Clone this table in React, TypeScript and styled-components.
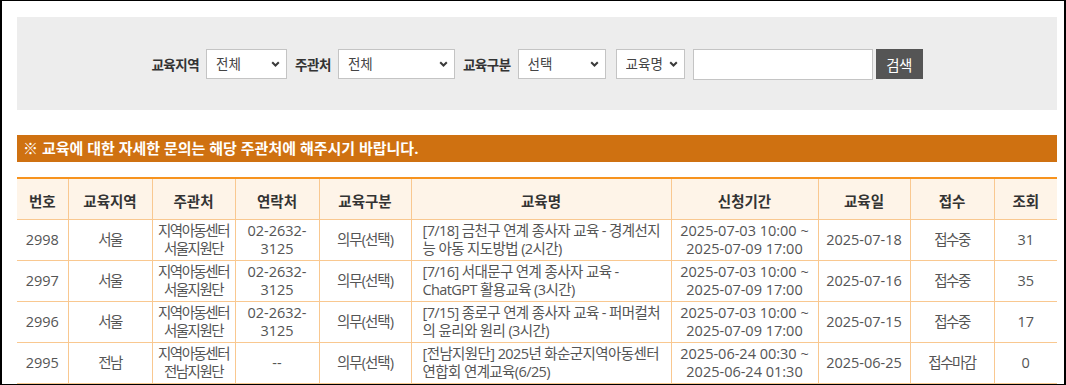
import React from 'react';
import styled, { createGlobalStyle } from 'styled-components';

interface Course {
    no: number;
    region: string;
    org: string[];
    phone: string[];
    kind: string;
    title: string[];
    period: string[];
    date: string;
    status: string;
    views: number;
}

const courses: Course[] = [
    {
        no: 2998,
        region: '서울',
        org: ['지역아동센터', '서울지원단'],
        phone: ['02-2632-', '3125'],
        kind: '의무(선택)',
        title: ['[7/18] 금천구 연계 종사자 교육 - 경계선지', '능 아동 지도방법 (2시간)'],
        period: ['2025-07-03 10:00 ~', '2025-07-09 17:00'],
        date: '2025-07-18',
        status: '접수중',
        views: 31,
    },
    {
        no: 2997,
        region: '서울',
        org: ['지역아동센터', '서울지원단'],
        phone: ['02-2632-', '3125'],
        kind: '의무(선택)',
        title: ['[7/16] 서대문구 연계 종사자 교육 -', 'ChatGPT 활용교육 (3시간)'],
        period: ['2025-07-03 10:00 ~', '2025-07-09 17:00'],
        date: '2025-07-16',
        status: '접수중',
        views: 35,
    },
    {
        no: 2996,
        region: '서울',
        org: ['지역아동센터', '서울지원단'],
        phone: ['02-2632-', '3125'],
        kind: '의무(선택)',
        title: ['[7/15] 종로구 연계 종사자 교육 - 퍼머컬처', '의 윤리와 원리 (3시간)'],
        period: ['2025-07-03 10:00 ~', '2025-07-09 17:00'],
        date: '2025-07-15',
        status: '접수중',
        views: 17,
    },
    {
        no: 2995,
        region: '전남',
        org: ['지역아동센터', '전남지원단'],
        phone: ['--'],
        kind: '의무(선택)',
        title: ['[전남지원단] 2025년 화순군지역아동센터', '연합회 연계교육(6/25)'],
        period: ['2025-06-24 00:30 ~', '2025-06-24 01:30'],
        date: '2025-06-25',
        status: '접수마감',
        views: 0,
    },
];

const columns = [
    { label: '번호', width: 51 },
    { label: '교육지역', width: 84 },
    { label: '주관처', width: 83 },
    { label: '연락처', width: 84 },
    { label: '교육구분', width: 92 },
    { label: '교육명', width: 260 },
    { label: '신청기간', width: 147 },
    { label: '교육일', width: 92 },
    { label: '접수', width: 84 },
    { label: '조회', width: 63 },
];

const Chevron = () => (
    <ChevronIcon viewBox="0 0 9 6" width="9" height="6">
        <path d="M1.2 1.2 L4.5 4.5 L7.8 1.2" fill="none" stroke="#3a3a3a" strokeWidth="2" />
    </ChevronIcon>
);

const SelectBox: React.FC<{ width: number; options: string[]; offset?: number }> = ({ width, options, offset }) => (
    <SelectWrap $width={width} $offset={offset ?? 0}>
        <Select defaultValue={options[0]}>
            {options.map(option => <option key={option}>{option}</option>)}
        </Select>
        <Chevron />
    </SelectWrap>
);

const Lines: React.FC<{ lines: string[] }> = ({ lines }) => (
    <>
        {lines.map((line, key) => <Line key={key}>{line}</Line>)}
    </>
);

const App: React.FC = () => (
    <>
        <GlobalStyle />
        <Frame>
            <SearchPanel onSubmit={e => e.preventDefault()}>
                <SearchRow>
                    <Field>
                        <Label>교육지역</Label>
                        <SelectBox width={81} options={['전체', '서울', '전남']} />
                    </Field>
                    <Field>
                        <Label>주관처</Label>
                        <SelectBox width={117} options={['전체']} />
                    </Field>
                    <Field>
                        <Label>교육구분</Label>
                        <SelectBox width={88} options={['선택', '의무', '의무(선택)']} />
                        <SelectBox width={69} offset={3} options={['교육명']} />
                    </Field>
                    <SearchBox>
                        <SearchInput type="text" />
                        <SearchButton type="submit">검색</SearchButton>
                    </SearchBox>
                </SearchRow>
            </SearchPanel>

            <Notice>※ 교육에 대한 자세한 문의는 해당 주관처에 해주시기 바랍니다.</Notice>

            <BoardTable>
                <colgroup>
                    {columns.map(col => <col key={col.label} style={{ width: col.width }} />)}
                </colgroup>
                <thead>
                    <tr>
                        {columns.map(col => <HeadCell key={col.label}>{col.label}</HeadCell>)}
                    </tr>
                </thead>
                <tbody>
                    {courses.map(course =>
                        <BodyRow key={course.no}>
                            <Cell>{course.no}</Cell>
                            <Cell $spacing={-1.5}>{course.region}</Cell>
                            <Cell $spacing={-1.5}><Lines lines={course.org} /></Cell>
                            <Cell><Lines lines={course.phone} /></Cell>
                            <Cell $spacing={-1}>{course.kind}</Cell>
                            <TitleCell><Lines lines={course.title} /></TitleCell>
                            <Cell><Lines lines={course.period} /></Cell>
                            <Cell>{course.date}</Cell>
                            <Cell $spacing={-1.5}>{course.status}</Cell>
                            <Cell>{course.views}</Cell>
                        </BodyRow>
                    )}
                </tbody>
            </BoardTable>
        </Frame>
    </>
);

const GlobalStyle = createGlobalStyle`
    html, body {
        margin: 0;
        padding: 0;
        background: #fff;
    }

    body {
        font-family: "Open Sans", "Noto Sans CJK KR", sans-serif;
    }
`;

const Frame = styled.div`
    box-sizing: border-box;
    width: 1066px;
    height: 385px;
    overflow: hidden;
    border: 2px solid #000;
    border-top-width: 1px;
    border-bottom-width: 1px;
    padding: 16px 7px 0 15px;
`;

const SearchPanel = styled.form`
    display: flex;
    align-items: center;
    justify-content: center;
    height: 93px;
    margin: 0;
    background: #ededed;
`;

const SearchRow = styled.div`
    display: flex;
    align-items: center;
    gap: 8px;
    margin-top: 1px;
`;

const Field = styled.div`
    display: flex;
    align-items: center;
    gap: 7px;
`;

const Label = styled.span`
    font-size: 13.5px;
    font-weight: 700;
    color: #333;
    letter-spacing: -0.5px;
`;

const SelectWrap = styled.div<{ $width: number; $offset: number }>`
    position: relative;
    width: ${p => p.$width}px;
    height: 30px;
    margin-left: ${p => p.$offset}px;
`;

const Select = styled.select`
    box-sizing: border-box;
    width: 100%;
    height: 100%;
    appearance: none;
    border: 1px solid #c4c4c4;
    border-radius: 0;
    background: #fff;
    padding: 0 20px 0 9px;
    font-family: "Open Sans", "Noto Sans CJK KR", sans-serif;
    font-size: 13.5px;
    color: #444;
    outline: none;
`;

const ChevronIcon = styled.svg`
    position: absolute;
    right: 7px;
    top: 12px;
    pointer-events: none;
`;

const SearchBox = styled.div`
    display: flex;
    align-items: center;
    gap: 3px;
`;

const SearchInput = styled.input`
    box-sizing: border-box;
    width: 180px;
    height: 31px;
    margin: 1px 0 0;
    border: 1px solid #c4c4c4;
    background: #fff;
    padding: 0 6px;
    outline: none;
`;

const SearchButton = styled.button`
    width: 47px;
    height: 30px;
    border: none;
    background: #555;
    color: #fff;
    font-family: "Open Sans", "Noto Sans CJK KR", sans-serif;
    font-size: 14.5px;
    padding: 0;
    letter-spacing: -0.5px;
`;

const Notice = styled.div`
    margin-top: 25px;
    height: 27px;
    line-height: 27px;
    padding-left: 6px;
    background: #cf7111;
    color: #fff;
    font-size: 15px;
    font-weight: 700;
`;

const BoardTable = styled.table`
    width: 100%;
    margin-top: 15px;
    border-collapse: collapse;
    table-layout: fixed;
    border-top: 2px solid #f7931e;
    font-size: 14.5px;
`;

const HeadCell = styled.th`
    height: 38px;
    padding: 2px 0 0;
    background: #fef4e8;
    color: #333;
    font-size: 14.5px;
    font-weight: 700;
    border-left: 1px solid #f9c890;
    border-bottom: 1px solid #f9c890;

    &:first-child {
        border-left: none;
    }
`;

const BodyRow = styled.tr`
    height: 41px;
`;

const Cell = styled.td<{ $spacing?: number }>`
    padding: 1px 1px 2px;
    line-height: 18px;
    text-align: center;
    color: #555;
    letter-spacing: ${p => p.$spacing ?? 0}px;
    border-left: 1px solid #f9c890;
    border-bottom: 1px solid #f9c890;

    &:first-child {
        border-left: none;
    }
`;

const TitleCell = styled(Cell)`
    text-align: left;
    padding-left: 11px;
    letter-spacing: -0.6px;
`;

const Line = styled.span`
    display: block;
    white-space: nowrap;
`;

export default App;
